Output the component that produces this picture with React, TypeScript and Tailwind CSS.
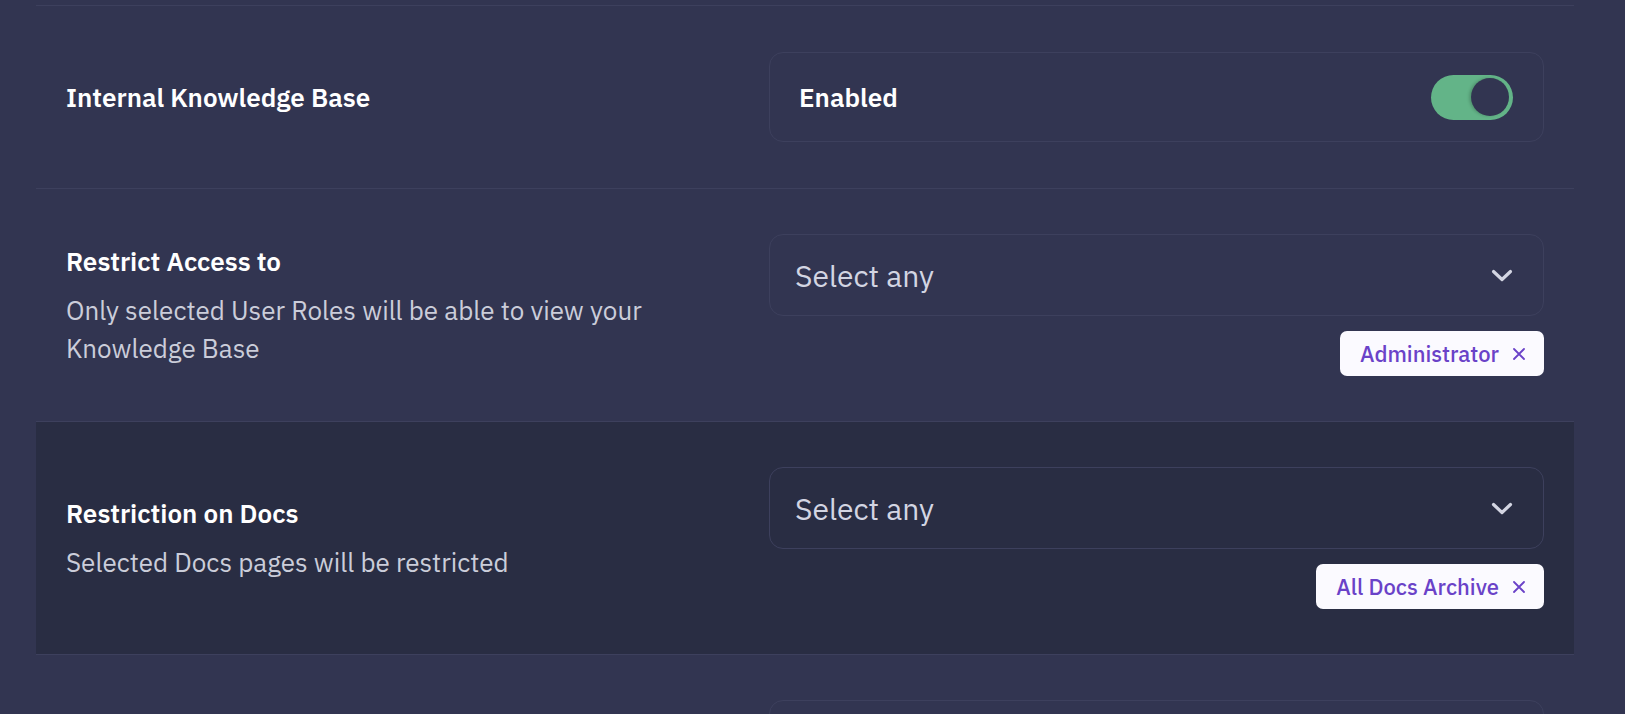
import React from 'react'

type Option = {
  label: string
}

const Chevron = () => (
  <svg width="22" height="13" viewBox="0 0 22 13" fill="none" className="text-[#d3d5e2]">
    <polyline points="2.5,2.5 11,10.5 19.5,2.5" stroke="currentColor" strokeWidth="3.2" strokeLinecap="round" strokeLinejoin="round" />
  </svg>
)

const Cross = () => (
  <svg width="12" height="12" viewBox="0 0 12 12" fill="none">
    <path d="M1 1l10 10M11 1L1 11" stroke="currentColor" strokeWidth="1.8" strokeLinecap="round" />
  </svg>
)

function Toggle({ on }: { on: boolean }) {
  return (
    <div className={`flex h-[45px] w-[82px] items-center rounded-full pr-[4px] ${on ? 'justify-end bg-[#63b488]' : 'justify-start bg-[#4a4e6b]'}`}>
      <div className="h-[38px] w-[38px] rounded-full bg-[#323551] shadow-[-2px_0_3px_rgba(0,0,0,0.18)]" />
    </div>
  )
}

function Chip({ option }: { option: Option }) {
  return (
    <div className="flex h-[45px] items-center gap-[14px] rounded-[7px] bg-[#fbfaff] pl-[20px] pr-[19px] text-[22px] font-medium text-[#6a42c8]">
      <span>{option.label}</span>
      <Cross />
    </div>
  )
}

function MultiSelect({ selected }: { selected: Option[] }) {
  return (
    <div className="flex w-full flex-col items-end gap-[15px]">
      <div className="flex h-[82px] w-full items-center justify-between rounded-[14px] border border-[#3d405d] pl-[25px] pr-[30px]">
        <span className="text-[30px] text-[#d3d5e2]">Select any</span>
        <Chevron />
      </div>
      {selected.map((opt) => (
        <Chip key={opt.label} option={opt} />
      ))}
    </div>
  )
}

function SettingRow({
  title,
  description,
  dark,
  tall,
  children,
}: {
  title: string
  description?: React.ReactNode
  dark?: boolean
  tall?: boolean
  children: React.ReactNode
}) {
  return (
    <div
      className={`flex items-center border-b border-[#3d405d] px-[30px] ${tall ? 'py-[46px]' : 'py-[45px]'} ${dark ? 'bg-[#292d43]' : ''}`}
    >
      <div className="flex-1">
        <h3 className="text-[26px] font-semibold leading-[36px] text-white">{title}</h3>
        {description && <p className="mt-[12px] text-[26px] leading-[38px] text-[#cbcdda]">{description}</p>}
      </div>
      <div className="w-[775px]">{children}</div>
    </div>
  )
}

export default function App() {
  return (
    <div className="h-screen overflow-hidden bg-[#323551] pl-[36px] pr-[51px] pt-[5px] font-['IBM_Plex_Sans','Open_Sans',sans-serif]">
      <div className="border-t border-[#3d405d]">
        <SettingRow title="Internal Knowledge Base" tall>
          <div className="flex h-[90px] items-center justify-between rounded-[14px] border border-[#3d405d] pl-[29px] pr-[30px]">
            <span className="text-[26px] font-semibold text-white">Enabled</span>
            <Toggle on />
          </div>
        </SettingRow>

        <SettingRow
          title="Restrict Access to"
          description={
            <>
              Only selected User Roles will be able to view your
              <br />
              Knowledge Base
            </>
          }
        >
          <MultiSelect selected={[{ label: 'Administrator' }]} />
        </SettingRow>

        <SettingRow title="Restriction on Docs" description="Selected Docs pages will be restricted" dark>
          <MultiSelect selected={[{ label: 'All Docs Archive' }]} />
        </SettingRow>

        {/* next row, only its field's top edge is in view */}
        <div className="flex justify-end px-[30px] pt-[45px]">
          <div className="h-[82px] w-[775px] rounded-[14px] border border-[#3d405d]" />
        </div>
      </div>
    </div>
  )
}
